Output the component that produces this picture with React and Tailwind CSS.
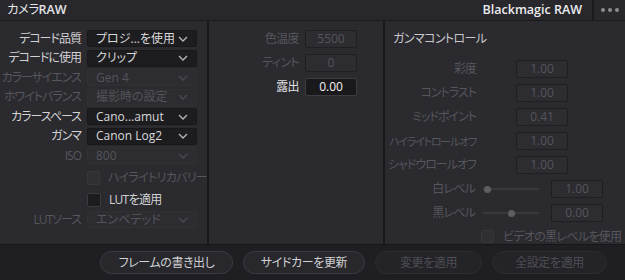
import React from "react";

const font = { fontFamily: '"Open Sans", "Noto Sans CJK JP", sans-serif', fontFeatureSettings: '"palt"' };

function Chevron({ dim }) {
  return (
    <svg width="10" height="6" viewBox="0 0 10 6" className="shrink-0">
      <path d="M1 1 L5 5 L9 1" fill="none" stroke={dim ? "#4a4a50" : "#b8b8bc"} strokeWidth="1.3" />
    </svg>
  );
}

function Dropdown({ label, value, dim }) {
  return (
    <div className="flex items-center h-[17px]">
      <div className={`w-[81px] text-right text-[12px] tracking-[-1px] leading-none whitespace-nowrap ${dim ? "text-[#56565c]" : "text-[#d2d2d4]"}`}>{label}</div>
      <div
        className={`ml-[6px] w-[110px] h-[17px] rounded-[2px] flex items-center justify-between pl-[8px] pr-[8px] text-[12px] leading-none ${
          dim ? "bg-[#2c2c31] border border-[#303035] text-[#54545a]" : "bg-[#1d1d20] border border-[#18181b] text-[#d8d8da]"
        }`}
      >
        <span className="whitespace-nowrap">{value}</span>
        <Chevron dim={dim} />
      </div>
    </div>
  );
}

function Check({ label, dim }) {
  return (
    <div className="flex items-center h-[14px] pl-[87px]">
      <div className={`w-[14px] h-[14px] rounded-[2px] ${dim ? "bg-[#2f2f34] border border-[#36363b]" : "bg-[#1c1c1f] border border-[#3a3a40]"}`} />
      <span className={`ml-[8px] text-[12px] tracking-[-0.7px] leading-none whitespace-nowrap ${dim ? "text-[#56565c]" : "text-[#d2d2d4]"}`}>{label}</span>
    </div>
  );
}

function NumBox({ value, active, w = "w-[52px]" }) {
  return (
    <div
      className={`${w} h-[18px] rounded-[2px] flex items-center justify-center text-[12px] leading-none ${
        active ? "bg-[#19191c] border border-[#3c3c42] text-[#f4f4f4]" : "bg-[#2c2c31] border border-[#1f1f23] text-[#55555b]"
      }`}
    >
      {value}
    </div>
  );
}

function MidRow({ label, value, active }) {
  return (
    <div className="flex items-center h-[18px]">
      <div className={`w-[90px] text-right text-[12px] tracking-[-0.6px] leading-none ${active ? "text-[#e0e0e2]" : "text-[#56565c]"}`}>{label}</div>
      <div className="ml-[6px]">
        <NumBox value={value} active={active} />
      </div>
    </div>
  );
}

function RightRow({ label, value, tight }) {
  return (
    <div className="flex items-center h-[18px]">
      <div className={`w-[91px] shrink-0 flex justify-end leading-none text-[#56565c] whitespace-nowrap ${tight ? "text-[11px] tracking-[-1.2px]" : "text-[12px] tracking-[-1px]"}`}>
        <span>{label}</span>
      </div>
      <div className="ml-[40px]">
        <NumBox value={value} />
      </div>
    </div>
  );
}

function SliderRow({ label, value, knob }) {
  return (
    <div className="flex items-center h-[18px]">
      <div className="w-[90px] text-right text-[12px] tracking-[-0.8px] leading-none text-[#56565c] whitespace-nowrap">{label}</div>
      <div className="ml-[8px] w-[56px] h-[10px] relative flex items-center">
        <div className="w-full h-[2px] bg-[#38383d]" />
        <div className="absolute w-[7px] h-[7px] rounded-full bg-[#5d5d62]" style={{ left: knob }} />
      </div>
      <div className="ml-[12px]">
        <NumBox value={value} />
      </div>
    </div>
  );
}

function Btn({ label, w, dim }) {
  return (
    <div
      className={`${w} h-[23px] rounded-full flex items-center justify-center text-[12px] tracking-[-0.4px] leading-none border ${
        dim ? "border-[#2c2c31] text-[#4e4e54] bg-[#232328]" : "border-[#3a3a40] text-[#d2d2d4] bg-[#27272c]"
      }`}
    >
      {label}
    </div>
  );
}

export default function App() {
  return (
    <div className="w-[625px] h-[280px] bg-[#1f1f23] flex flex-col overflow-hidden" style={font}>
      {/* header */}
      <div className="h-[21px] flex items-stretch bg-[#27272c] border-b border-[#1a1a1d]">
        <div className="flex-1 flex items-center pl-[7px] text-[12.5px] font-semibold text-[#e4e4e6] leading-none">
          <span className="font-normal tracking-[-0.6px]">カメラ</span>RAW
        </div>
        <div className="flex items-center pr-[10px] text-[12.5px] font-semibold text-[#ececee] leading-none">Blackmagic RAW</div>
        <div className="w-[2px] bg-[#1a1a1d]" />
        <div className="w-[31px] flex items-center justify-center gap-[3px]">
          <div className="w-[4px] h-[4px] rounded-full bg-[#8c8c90]" />
          <div className="w-[4px] h-[4px] rounded-full bg-[#8c8c90]" />
          <div className="w-[4px] h-[4px] rounded-full bg-[#8c8c90]" />
        </div>
      </div>

      {/* panels */}
      <div className="h-[223px] flex bg-[#18181b]">
        {/* left */}
        <div className="w-[207px] bg-[#2a2a2f] flex flex-col pt-[9px] overflow-hidden">
          <div className="flex flex-col gap-[2.5px]">
            <Dropdown label="デコード品質" value="プロジ...を使用" />
            <Dropdown label="デコードに使用" value="クリップ" />
            <Dropdown label="カラーサイエンス" value="Gen 4" dim />
            <Dropdown label="ホワイトバランス" value="撮影時の設定" dim />
            <Dropdown label="カラースペース" value="Cano...amut" />
            <Dropdown label="ガンマ" value="Canon Log2" />
            <Dropdown label="ISO" value="800" dim />
          </div>
          <div className="mt-[7px]">
            <Check label="ハイライトリカバリー" dim />
          </div>
          <div className="mt-[8px]">
            <Check label="LUTを適用" />
          </div>
          <div className="mt-[4px]">
            <Dropdown label="LUTソース" value="エンベデッド" dim />
          </div>
        </div>
        <div className="w-[2px]" />
        {/* middle */}
        <div className="w-[174px] bg-[#2a2a2f] flex flex-col pt-[9px] gap-[6px]">
          <MidRow label="色温度" value="5500" />
          <MidRow label="ティント" value="0" />
          <MidRow label="露出" value="0.00" active />
        </div>
        <div className="w-[2px]" />
        {/* right */}
        <div className="flex-1 bg-[#2a2a2f] flex flex-col overflow-hidden">
          <div className="pl-[8px] pt-[12px] h-[39px] text-[12px] tracking-[-0.6px] leading-none text-[#c8c8cb]">ガンマコントロール</div>
          <div className="flex flex-col gap-[6px]">
            <RightRow label="彩度" value="1.00" />
            <RightRow label="コントラスト" value="1.00" />
            <RightRow label="ミッドポイント" value="0.41" />
            <RightRow label="ハイライトロールオフ" value="1.00" tight />
            <RightRow label="シャドウロールオフ" value="1.00" />
            <SliderRow label="白レベル" value="1.00" knob={1} />
            <SliderRow label="黒レベル" value="0.00" knob={25} />
          </div>
          <div className="flex items-center mt-[8px] pl-[96px]">
            <div className="w-[13px] h-[13px] rounded-[2px] bg-[#2e2e33] border border-[#36363b]" />
            <span className="ml-[9px] text-[12px] tracking-[-0.7px] leading-none text-[#56565c] whitespace-nowrap">ビデオの黒レベルを使用</span>
          </div>
        </div>
      </div>

      {/* bottom bar */}
      <div className="flex-1 bg-[#1f1f23] border-t border-[#161619] flex items-center pl-[100px] gap-[10px]">
        <Btn label="フレームの書き出し" w="w-[133px]" />
        <Btn label="サイドカーを更新" w="w-[122px]" />
        <Btn label="変更を適用" w="w-[107px]" dim />
        <Btn label="全設定を適用" w="w-[115px]" dim />
      </div>
    </div>
  );
}
